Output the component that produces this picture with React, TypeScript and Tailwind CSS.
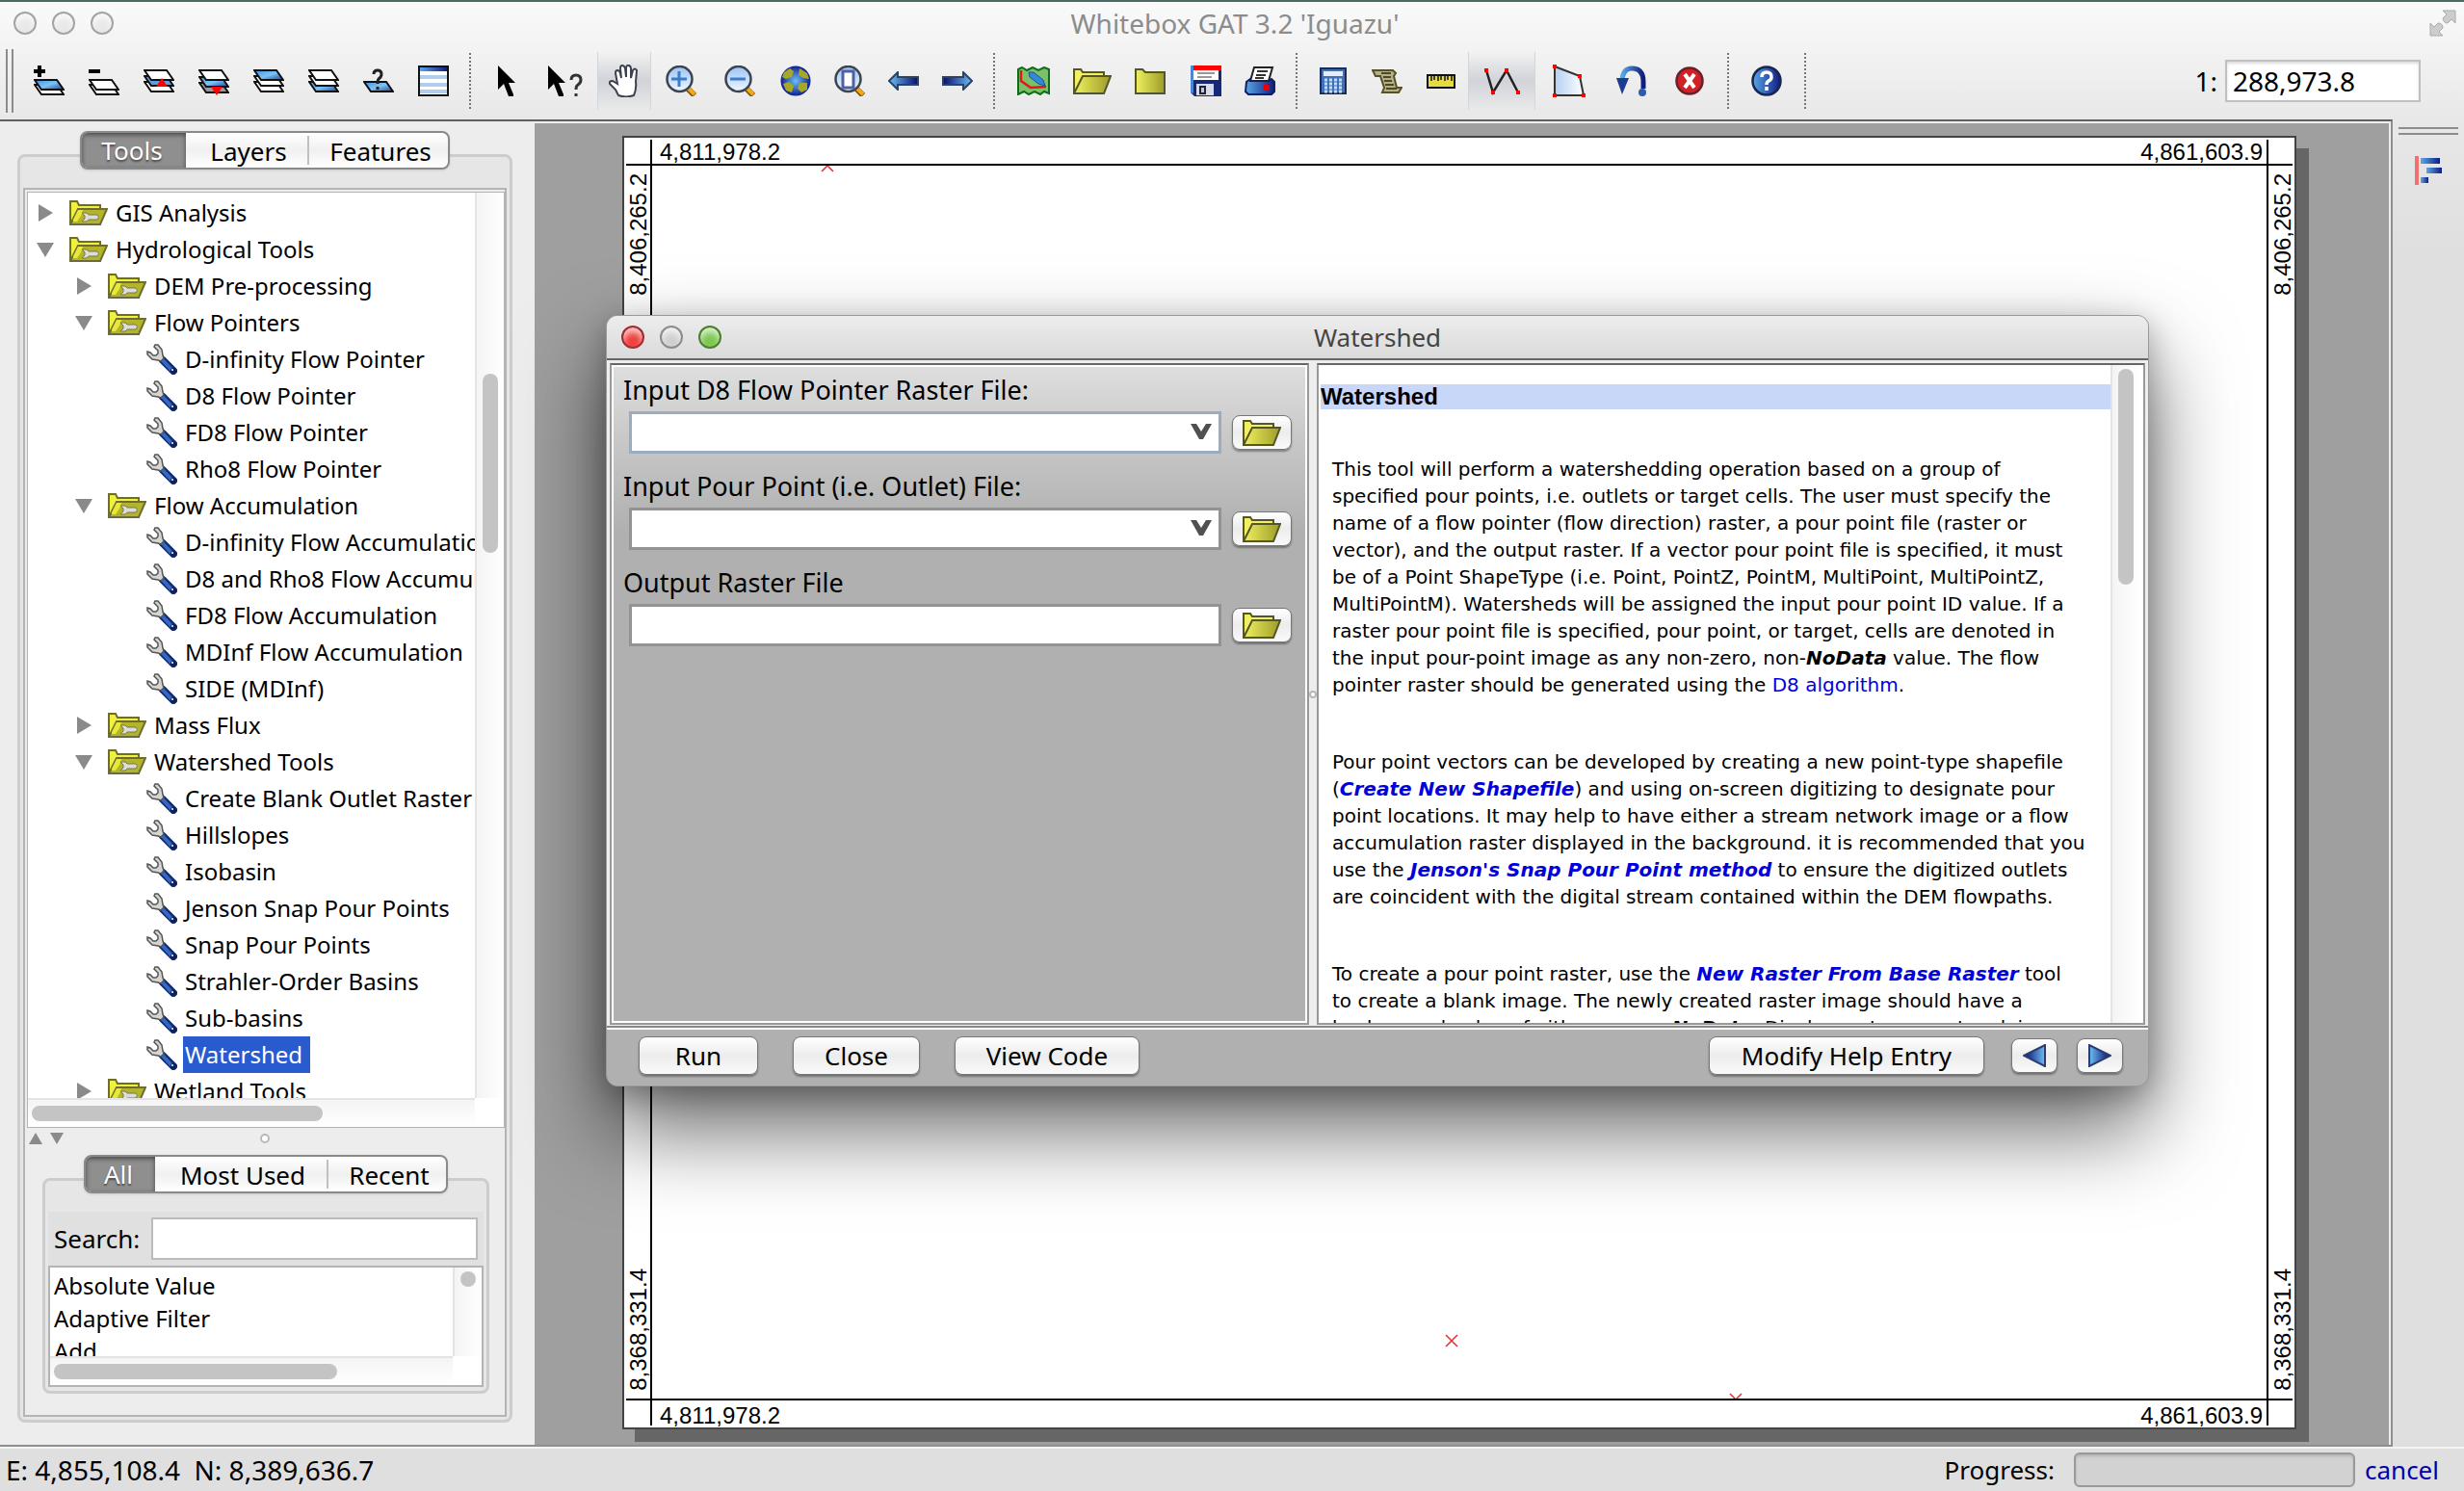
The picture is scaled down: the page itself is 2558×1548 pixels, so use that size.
import { ReactNode } from "react";
import clsx from "clsx";

const OUTLINE = "#3c4250";

/* ---------- gradients shared by every icon ---------- */

const IconDefs = () => (
  <svg width="0" height="0" className="absolute" aria-hidden="true">
    <defs>
      <linearGradient id="sky" x1="0" y1="0" x2="1" y2="1">
        <stop offset="0" stopColor="#3f8fe0" />
        <stop offset=".5" stopColor="#7cc4f5" />
        <stop offset="1" stopColor="#1b3fa0" />
      </linearGradient>
      <linearGradient id="arrowLeft" x1="0" y1="0" x2="1" y2="0">
        <stop offset="0" stopColor="#6cc0f4" />
        <stop offset="1" stopColor="#0a0a70" />
      </linearGradient>
      <linearGradient id="arrowRight" x1="1" y1="0" x2="0" y2="0">
        <stop offset="0" stopColor="#6cc0f4" />
        <stop offset="1" stopColor="#0a0a70" />
      </linearGradient>
      <linearGradient id="lens" x1="0" y1="0" x2="0" y2="1">
        <stop offset="0" stopColor="#9cc4f4" />
        <stop offset="1" stopColor="#eef7ff" />
      </linearGradient>
      <linearGradient id="gold" x1="0" y1="0" x2="1" y2="0">
        <stop offset="0" stopColor="#f0f060" />
        <stop offset="1" stopColor="#9c9c28" />
      </linearGradient>
      <linearGradient id="deep" x1="0" y1="0" x2="1" y2="0">
        <stop offset="0" stopColor="#5aa8e8" />
        <stop offset="1" stopColor="#101c80" />
      </linearGradient>
      <radialGradient id="ocean">
        <stop offset="0" stopColor="#6cc0f8" />
        <stop offset="1" stopColor="#10208c" />
      </radialGradient>
      <linearGradient id="pale" x1="0" y1="0" x2="1" y2="0">
        <stop offset="0" stopColor="#b4d0f0" />
        <stop offset="1" stopColor="#fff" />
      </linearGradient>
    </defs>
  </svg>
);

interface IconProps {
  w?: number;
  h?: number;
  children: ReactNode;
}

const Icon = ({ w = 32, h = 32, children }: IconProps) => (
  <svg width={w} height={h} viewBox={`0 0 ${w} ${h}`} fill="none" className="shrink-0" aria-hidden="true">
    {children}
  </svg>
);

interface SheetProps {
  y: number;
  fill?: string;
}

const Sheet = ({ y, fill = "#fff" }: SheetProps) => (
  <path d={`M1 ${y}H24L31 ${y + 10}H8Z`} fill={fill} stroke="#111" strokeWidth="2" />
);

const AddLayerIcon = () => (
  <Icon>
    <path d="M6 0V12M0 6H12" stroke="#000" strokeWidth="4" />
    <Sheet y={20} />
    <Sheet y={15} fill="url(#sky)" />
  </Icon>
);

const RemoveLayerIcon = () => (
  <Icon>
    <path d="M0 6H12" stroke="#000" strokeWidth="4" />
    <Sheet y={20} />
    <Sheet y={15} />
  </Icon>
);

const RaiseLayerIcon = () => (
  <Icon>
    <Sheet y={17} />
    <Sheet y={11} fill="#5aa0e0" />
    <Sheet y={5} />
    <path d="M19 13L25 22H13Z" fill="#f00" />
  </Icon>
);

const LowerLayerIcon = () => (
  <Icon>
    <Sheet y={18} fill="#999" />
    <Sheet y={12} fill="url(#sky)" />
    <Sheet y={5} />
    <path d="M13 22H25L19 31Z" fill="#f00" />
  </Icon>
);

const LayerToTopIcon = () => (
  <Icon>
    <Sheet y={17} />
    <Sheet y={11} />
    <Sheet y={5} fill="url(#sky)" />
  </Icon>
);

const LayerToBottomIcon = () => (
  <Icon>
    <Sheet y={17} fill="url(#sky)" />
    <Sheet y={11} />
    <Sheet y={5} />
  </Icon>
);

const LayerInfoIcon = () => (
  <Icon>
    <Sheet y={17} fill="url(#sky)" />
    <path d="M11 9Q11 5 15 5T19 9Q19 12 16 14Q15 15 15 19M15 22V25" stroke="#222" strokeWidth="3" />
  </Icon>
);

const TableIcon = () => (
  <Icon>
    <rect x="1" y="1" width="30" height="30" fill="#fff" stroke="#111" strokeWidth="2" />
    <rect x="2" y="2" width="28" height="4" fill="url(#deep)" />
    <path d="M2 10H30V14H2ZM2 18H30V22H2ZM2 25H30V29H2Z" fill="#b0cdee" />
  </Icon>
);

const ARROW = "M1 1V26L7 20L12 33H17V31L12 19H19Z";

const PointerIcon = () => (
  <Icon w={20} h={34}>
    <path d={ARROW} fill="#000" />
  </Icon>
);

const WhatsThisIcon = () => (
  <Icon w={38} h={34}>
    <path d={ARROW} fill="#000" />
    <path d="M25 16Q25 11 30 11T35 16Q35 19 32 21Q30 22 30 26M30 30V33" stroke="#333" strokeWidth="3" />
  </Icon>
);

const HandIcon = () => (
  <Icon h={34}>
    <path
      d="M10 32L7 26L1 20Q0 17 4 17L9 20L7 9Q7 6 9 6T12 9L13 14L12 4Q12 1 14 1T17 4L18 13L18 3Q19 0 21 1T23 4L23 14L25 6Q27 3 29 6L28 18Q29 25 26 32Q18 35 10 32Z"
      fill="#fff"
      stroke={OUTLINE}
      strokeWidth="2"
    />
  </Icon>
);

interface LensProps {
  children?: ReactNode;
}

const LensIcon = ({ children }: LensProps) => (
  <Icon>
    <path d="M21 22L30 31" stroke="#7a5200" strokeWidth="6" />
    <path d="M23 23L30 30" stroke="#f0a820" strokeWidth="4" />
    <circle cx="14.5" cy="14" r="13" fill="url(#lens)" stroke={OUTLINE} strokeWidth="2.5" />
    {children}
  </Icon>
);

const ZoomInIcon = () => (
  <LensIcon>
    <path d="M14 6V22M6 14H22" stroke="#3c7cc8" strokeWidth="3" />
  </LensIcon>
);

const ZoomOutIcon = () => (
  <LensIcon>
    <path d="M6 14H22" stroke="#3c7cc8" strokeWidth="3" />
  </LensIcon>
);

const ZoomPageIcon = () => (
  <LensIcon>
    <rect x="9" y="6" width="11" height="17" fill="#fff" stroke="#5060a0" strokeWidth="3" />
  </LensIcon>
);

const GlobeIcon = () => (
  <Icon>
    <circle cx="16" cy="16" r="15.5" fill="url(#ocean)" />
    <path
      d="M4 7L10 3L14 6L12 12L6 14L2 12ZM20 3L28 8L30 14L24 13L19 10ZM3 19L9 17L14 21L12 28L6 26ZM20 18L28 18L28 25L22 28L18 24Z"
      fill="#a8a828"
    />
  </Icon>
);

const BackIcon = () => (
  <Icon h={20}>
    <path d="M1 10L10 1V6H31V14H10V19Z" fill="url(#arrowLeft)" stroke="#2a4468" strokeWidth="2" />
  </Icon>
);

const ForwardIcon = () => (
  <Icon h={20}>
    <path d="M31 10L22 1V6H1V14H22V19Z" fill="url(#arrowRight)" stroke="#2a4468" strokeWidth="2" />
  </Icon>
);

const MapIcon = () => (
  <Icon w={34} h={30}>
    <path
      d="M1 3L5 1L10 4L16 1L22 4L28 1L33 3V28L28 26L24 29L18 26L12 29L7 26L1 29Z"
      fill="#7cc068"
      stroke="#0c6c1c"
      strokeWidth="2"
    />
    <path d="M4 4V15L14 22L30 21" stroke="#e01818" strokeWidth="2.5" />
    <path d="M12 6L17 6L27 14L29 20L22 18L13 11Z" fill="#3488d8" stroke="#1c50a0" />
  </Icon>
);

const OpenFolderIcon = () => (
  <Icon w={40} h={28}>
    <path d="M1 26V2H8L10 5H32V26Z" fill="#f0f060" stroke="#55552c" strokeWidth="2" />
    <path d="M1 27L10 9H39L32 27Z" fill="url(#gold)" stroke="#55552c" strokeWidth="2" />
  </Icon>
);

const FolderIcon = () => (
  <Icon h={28}>
    <path d="M1 27V2H8L11 5H31V27Z" fill="url(#gold)" stroke="#55552c" strokeWidth="2" />
  </Icon>
);

const SaveIcon = () => (
  <Icon>
    <path d="M0 0H32V32H4L0 28Z" fill="#182878" />
    <path d="M0 0H3V29L0 28Z" fill="#4c88d0" />
    <rect x="3" width="26" height="15" fill="#fff" />
    <rect x="3" width="29" height="5" fill="#f00" />
    <path d="M7 8H25M7 12H22" stroke="#999" strokeWidth="2" />
    <rect x="6" y="19" width="18" height="12" fill="#d8dce8" />
    <rect x="9" y="21" width="7" height="9" fill="#223" />
    <rect x="11" y="23" width="3" height="5" fill="#b8c8e8" />
  </Icon>
);

const PrinterIcon = () => (
  <Icon h={30}>
    <path d="M10 1H29L25 15H6Z" fill="#fff" stroke="#222" strokeWidth="2" />
    <path d="M13 5H24M12 9H22M11 12H20" stroke="#333" strokeWidth="2" />
    <path d="M2 16L6 13V15H25L28 13L31 16V26L28 29H4L1 26Z" fill="url(#deep)" stroke="#10205c" strokeWidth="2" />
    <rect x="20" y="19" width="6" height="6" fill="#e00" />
  </Icon>
);

const CalculatorIcon = () => (
  <Icon w={28} h={28}>
    <rect x="1" y="1" width="26" height="26" fill="#4070b8" stroke="#1c2c58" strokeWidth="2" />
    <rect x="4" y="4" width="20" height="5" fill="#e0eeff" />
    <path d="M5 13H24M5 17H24M5 21H24M5 25H24" stroke="#c0dcf8" strokeWidth="3" strokeDasharray="3 2" />
  </Icon>
);

const ScriptIcon = () => (
  <Icon h={26}>
    <path d="M1 2H22L25 5L23 8L26 20H31L28 25H11L13 20L9 8H4Z" fill="#b4b084" stroke="#55502c" strokeWidth="2" />
    <path d="M10 5H20M12 9H20M13 13H21M14 17H23M15 21H26" stroke="#4c4828" strokeWidth="2" />
  </Icon>
);

const RulerIcon = () => (
  <Icon w={30} h={15}>
    <rect x="1" y="1" width="28" height="13" fill="#e4dc40" stroke="#111" strokeWidth="2" />
    <path d="M5 2V7M8 2V6M12 2V7M15 2V6M19 2V7M22 2V6M26 2V7" stroke="#111" strokeWidth="1.5" />
  </Icon>
);

const PolylineIcon = () => (
  <Icon w={38} h={30}>
    <path d="M3 4L10 27L24 4L36 27" stroke="#222" strokeWidth="2.5" />
    <path d="M1 2H5V6H1ZM8 25H12V29H8ZM22 2H26V6H22ZM34 25H38V29H34Z" fill="#f00" />
  </Icon>
);

const PolygonIcon = () => (
  <Icon w={36} h={36}>
    <path d="M3 3L29 13L33 33H3Z" fill="url(#pale)" stroke="#333" strokeWidth="2" />
    <path d="M1 1H5V5H1ZM27 11H31V15H27ZM31 31H35V35H31ZM1 31H5V35H1Z" fill="#f00" />
  </Icon>
);

const UndoIcon = () => (
  <Icon>
    <path d="M6 15Q7 3 16 3Q28 3 28 17V24" stroke="url(#deep)" strokeWidth="5" />
    <path d="M0 13H13L6 30Z" fill="#1c3c90" />
    <circle cx="27" cy="28" r="4" fill="#2c5cb0" />
  </Icon>
);

const DeleteIcon = () => (
  <Icon w={30} h={30}>
    <circle cx="15" cy="15" r="13.5" fill="#d02028" stroke="#6a2028" strokeWidth="2.5" />
    <path d="M10 8L20 22M20 8L10 22" stroke="#fff" strokeWidth="4" />
  </Icon>
);

const HelpIcon = () => (
  <Icon>
    <circle cx="16" cy="16" r="14.5" fill="url(#deep)" stroke="#16264c" strokeWidth="2.5" />
    <path d="M11 12Q11 7 16 7T21 12Q21 15 18 16Q16 17 16 20M16 22V26" stroke="#fff" strokeWidth="3.5" />
  </Icon>
);

const ToolFolderIcon = () => (
  <Icon w={40} h={26}>
    <path d="M1 25V1H8L10 5H32V25Z" fill="#f0f040" stroke="#6c6c38" strokeWidth="2" />
    <path d="M1 25L9 9H39L32 25Z" fill="#b4b428" stroke="#6c6c38" strokeWidth="2" />
    <path d="M4 20L9 10H14L12 16L8 22H4Z" fill="#e8e838" />
    <path d="M13 13L18 13L20 15H29Q32 17 29 20H20L18 22H13L16 19V16Z" fill="#dcdcdc" stroke="#77774a" />
  </Icon>
);

const WrenchIcon = () => (
  <Icon>
    <path d="M17 17L28 28" stroke="#142c68" strokeWidth="8" strokeLinecap="round" />
    <path d="M16 16L26 27" stroke="#3468c8" strokeWidth="4" />
    <path
      d="M9 1L12 1L16 6L17 12L18 15L15 18L12 17L6 16L1 11V8L4 9L7 12H10L12 10V7L8 3Z"
      fill="#d4d4d0"
      stroke="#555"
      strokeWidth="1.5"
    />
    <circle cx="28" cy="28" r="3" fill="#10205c" />
    <circle cx="27" cy="27" r="1" fill="#fff" />
  </Icon>
);

const HistogramIcon = () => (
  <Icon w={28} h={30}>
    <rect width="4" height="30" fill="#f07070" />
    <rect x="6" y="2" width="20" height="6" fill="url(#deep)" />
    <rect x="12" y="12" width="16" height="6" fill="url(#deep)" />
    <rect x="6" y="22" width="8" height="6" fill="url(#deep)" />
  </Icon>
);

const FullscreenIcon = () => (
  <Icon w={28} h={28}>
    <path
      d="M14 1H27V14L23 10L19 14Q15 14 14 9L18 5ZM1 14L5 18L9 14Q14 14 14 19L10 23L14 27H1Z"
      fill="#ccc"
      stroke="#aaa"
    />
  </Icon>
);

const Triangle = ({ open }: { open: boolean }) => (
  <Icon w={18} h={18}>
    <path d={open ? "M0 2H18L9 17Z" : "M2 0V18L17 9Z"} fill="#8a8a8a" />
  </Icon>
);

/* ---------- main tool bar ---------- */

interface Tool {
  label: string;
  icon: ReactNode;
  width: string;
  pressed?: boolean;
}

const toolGroups: Tool[][] = [
  [
    { label: "Add layer", icon: <AddLayerIcon />, width: "w-[57px]" },
    { label: "Remove layer", icon: <RemoveLayerIcon />, width: "w-[57px]" },
    { label: "Raise layer", icon: <RaiseLayerIcon />, width: "w-[57px]" },
    { label: "Lower layer", icon: <LowerLayerIcon />, width: "w-[57px]" },
    { label: "Layer to top", icon: <LayerToTopIcon />, width: "w-[57px]" },
    { label: "Layer to bottom", icon: <LayerToBottomIcon />, width: "w-[57px]" },
    { label: "Layer properties", icon: <LayerInfoIcon />, width: "w-[57px]" },
    { label: "Attribute table", icon: <TableIcon />, width: "w-[57px]" },
  ],
  [
    { label: "Select", icon: <PointerIcon />, width: "w-[56px]" },
    { label: "Select feature", icon: <WhatsThisIcon />, width: "w-[66px]" },
    { label: "Pan", icon: <HandIcon />, width: "w-[56px]", pressed: true },
    { label: "Zoom in", icon: <ZoomInIcon />, width: "w-[62px]" },
    { label: "Zoom out", icon: <ZoomOutIcon />, width: "w-[60px]" },
    { label: "Full extent", icon: <GlobeIcon />, width: "w-[56px]" },
    { label: "Zoom to page", icon: <ZoomPageIcon />, width: "w-[56px]" },
    { label: "Previous extent", icon: <BackIcon />, width: "w-[56px]" },
    { label: "Next extent", icon: <ForwardIcon />, width: "w-[56px]" },
  ],
  [
    { label: "New map", icon: <MapIcon />, width: "w-[62px]" },
    { label: "Open map", icon: <OpenFolderIcon />, width: "w-[60px]" },
    { label: "Close map", icon: <FolderIcon />, width: "w-[60px]" },
    { label: "Save map", icon: <SaveIcon />, width: "w-[56px]" },
    { label: "Print map", icon: <PrinterIcon />, width: "w-[56px]" },
  ],
  [
    { label: "Raster calculator", icon: <CalculatorIcon />, width: "w-[56px]" },
    { label: "Scripting", icon: <ScriptIcon />, width: "w-[56px]" },
    { label: "Measure distance", icon: <RulerIcon />, width: "w-[56px]" },
    { label: "Edit vector", icon: <PolylineIcon />, width: "w-[70px]", pressed: true },
    { label: "Digitize feature", icon: <PolygonIcon />, width: "w-[70px]" },
    { label: "Undo last node", icon: <UndoIcon />, width: "w-[60px]" },
    { label: "Delete feature", icon: <DeleteIcon />, width: "w-[60px]" },
  ],
  [{ label: "Help", icon: <HelpIcon />, width: "w-[60px]" }],
];

const ToolButton = ({ label, icon, width, pressed }: Tool) => (
  <button
    aria-label={label}
    aria-pressed={pressed}
    className={clsx(
      "h-[60px] flex items-center justify-center",
      width,
      pressed && "border-x border-gray-300 bg-gradient-to-b from-transparent via-gray-400/35 to-transparent"
    )}
  >
    {icon}
  </button>
);

const Light = ({ color, size }: { color: string; size: string }) => (
  <span className={clsx("rounded-full border-2 shadow-[inset_0_5px_6px_rgba(255,255,255,0.7)]", color, size)} />
);

const Header = () => (
  <header className="border-t-2 border-[#4d6a66] bg-gradient-to-b from-[#fafafa] to-[#e8e8e8]">
    <div className="h-[44px] grid grid-cols-[1fr_auto_1fr] items-center pl-[14px] pr-2">
      <div className="flex gap-4">
        <Light color="bg-[#e8e8e8] border-[#a4a4a4]" size="size-6" />
        <Light color="bg-[#e8e8e8] border-[#a4a4a4]" size="size-6" />
        <Light color="bg-[#e8e8e8] border-[#a4a4a4]" size="size-6" />
      </div>
      <h1 className="text-[28px] leading-8 text-[#8c8c8c]">Whitebox GAT 3.2 'Iguazu'</h1>
      <div className="flex justify-end">
        <FullscreenIcon />
      </div>
    </div>
    <div className="h-[78px] flex items-center pb-[2px] pl-[6px] pr-[45px]">
      <div className="w-2 h-[66px] mr-2 border-x-2 border-[#8c8c8c]" />
      {toolGroups.map((group, i) => (
        <div key={i} className="flex items-center">
          {group.map((tool) => (
            <ToolButton key={tool.label} {...tool} />
          ))}
          <div className="w-5 flex justify-center">
            <div className="h-[58px] border-l-2 border-dotted border-[#777]" />
          </div>
        </div>
      ))}
      <label className="ml-auto flex items-center gap-2 text-[28px] leading-8">
        1:
        <input
          defaultValue="288,973.8"
          className="w-[203px] h-[44px] px-[6px] bg-white border-2 border-[#c0c0c0] shadow-[inset_0_2px_3px_rgba(0,0,0,0.15)]"
        />
      </label>
    </div>
  </header>
);

/* ---------- side panel ---------- */

interface Node {
  label: string;
  level: 0 | 1 | 2;
  open?: boolean;
  selected?: boolean;
}

const nodes: Node[] = [
  { label: "GIS Analysis", level: 0 },
  { label: "Hydrological Tools", level: 0, open: true },
  { label: "DEM Pre-processing", level: 1 },
  { label: "Flow Pointers", level: 1, open: true },
  { label: "D-infinity Flow Pointer", level: 2 },
  { label: "D8 Flow Pointer", level: 2 },
  { label: "FD8 Flow Pointer", level: 2 },
  { label: "Rho8 Flow Pointer", level: 2 },
  { label: "Flow Accumulation", level: 1, open: true },
  { label: "D-infinity Flow Accumulation", level: 2 },
  { label: "D8 and Rho8 Flow Accumulation", level: 2 },
  { label: "FD8 Flow Accumulation", level: 2 },
  { label: "MDInf Flow Accumulation", level: 2 },
  { label: "SIDE (MDInf)", level: 2 },
  { label: "Mass Flux", level: 1 },
  { label: "Watershed Tools", level: 1, open: true },
  { label: "Create Blank Outlet Raster", level: 2 },
  { label: "Hillslopes", level: 2 },
  { label: "Isobasin", level: 2 },
  { label: "Jenson Snap Pour Points", level: 2 },
  { label: "Snap Pour Points", level: 2 },
  { label: "Strahler-Order Basins", level: 2 },
  { label: "Sub-basins", level: 2 },
  { label: "Watershed", level: 2, selected: true },
  { label: "Wetland Tools", level: 1 },
];

const indents = ["pl-[9px]", "pl-[49px]", "pl-[123px]"];

const TreeRow = ({ label, level, open = false, selected }: Node) => (
  <li role="treeitem" aria-selected={!!selected} className={clsx("h-[38px] flex items-center", indents[level])}>
    {level < 2 ? (
      <>
        <Triangle open={open} />
        <span className="ml-4 mr-[6px]">
          <ToolFolderIcon />
        </span>
      </>
    ) : (
      <span className="mr-[6px]">
        <WrenchIcon />
      </span>
    )}
    <span
      className={clsx(
        "h-full pl-[2px] pr-2 leading-[38px] whitespace-nowrap",
        selected && "bg-[#2a5bce] text-white"
      )}
    >
      {label}
    </span>
  </li>
);

interface TabsProps {
  labels: string[];
  widths: string[];
}

const Tabs = ({ labels, widths }: TabsProps) => (
  <div
    role="tablist"
    className="relative z-10 h-10 flex items-center overflow-hidden rounded-lg border-2 border-[#8a8a8a] bg-gradient-to-b from-white via-[#f0f0f0] to-white shadow-sm"
  >
    {labels.map((label, i) => (
      <button
        key={label}
        role="tab"
        aria-selected={i === 0}
        className={clsx(
          "text-[26px] leading-8",
          widths[i],
          i === 0
            ? "h-full pr-1 bg-[#8f8f8f] text-white shadow-[inset_0_2px_5px_rgba(0,0,0,0.5)] [text-shadow:0_2px_2px_rgba(0,0,0,0.5)]"
            : "h-[30px] pl-1",
          i === 2 && "border-l-2 border-[#c0c0c0]"
        )}
      >
        {label}
      </button>
    ))}
  </div>
);

const VerticalBar = ({ thumb }: { thumb: string }) => (
  <div className="w-[30px] shrink-0 border-l-2 border-[#e4e4e4] bg-gradient-to-r from-[#f4f4f4] to-white">
    <div className={clsx("w-4 mx-auto rounded-full bg-[#c4c4c4]", thumb)} />
  </div>
);

const HorizontalBar = ({ thumb }: { thumb: string }) => (
  <div className="h-[30px] shrink-0 mr-[30px] border-t-2 border-[#e4e4e4] flex items-center bg-gradient-to-b from-[#f4f4f4] to-white">
    <div className={clsx("h-4 ml-1 rounded-full bg-[#c4c4c4]", thumb)} />
  </div>
);

const Sidebar = () => (
  <aside className="w-[555px] shrink-0 flex flex-col pt-[10px] pb-[23px] pl-[18px] pr-[23px] bg-[#ededed]">
    <div className="flex justify-center">
      <Tabs labels={["Tools", "Layers", "Features"]} widths={["w-[108px]", "w-[126px]", "w-[146px]"]} />
    </div>
    <div className="flex-1 min-h-0 -mt-4 pt-8 px-[3px] pb-[3px] flex flex-col rounded-lg border-[3px] border-[#cdcdcd] bg-[#e6e6e6]">
      <div className="flex-1 min-h-0 flex flex-col border-2 border-[#b4b4b4] bg-[#ededed]">
        {/* Tool tree */}
        <div className="flex-1 min-h-0 my-[2px] ml-[2px] flex flex-col border border-[#b4b4b4] bg-white">
          <div className="flex-1 min-h-0 flex">
            <ul role="tree" className="flex-1 min-w-0 pt-[2px] overflow-hidden text-[24px]">
              {nodes.map((node) => (
                <TreeRow key={node.label} {...node} />
              ))}
            </ul>
            <VerticalBar thumb="h-[186px] mt-[188px]" />
          </div>
          <HorizontalBar thumb="w-[302px]" />
        </div>

        {/* Split pane handle */}
        <div className="h-[18px] grid grid-cols-3 items-center px-1">
          <div className="flex gap-2">
            <Icon w={14} h={12}>
              <path d="M0 12H14L7 0Z" fill="#8a8a8a" />
            </Icon>
            <Icon w={14} h={12}>
              <path d="M0 0H14L7 12Z" fill="#8a8a8a" />
            </Icon>
          </div>
          <span className="size-[10px] mx-auto rounded-full border-2 border-[#b8b8b8] bg-white" />
        </div>

        {/* Search */}
        <div className="pt-2 pl-[18px] pr-4 pb-[22px]">
          <div className="flex justify-center">
            <Tabs labels={["All", "Most Used", "Recent"]} widths={["w-[72px]", "w-[178px]", "w-[124px]"]} />
          </div>
          <div className="-mt-4 pt-8 px-[3px] pb-1 rounded-lg border-[3px] border-[#cdcdcd] bg-[#e6e6e6]">
            <label className="h-[56px] flex items-center gap-3 px-[6px] bg-[#e0e0e0] text-[26px]">
              Search:
              <input className="flex-1 min-w-0 h-[44px] px-2 border-2 border-[#bcbcbc] bg-white" />
            </label>
            <div className="h-[126px] flex flex-col border-2 border-[#b4b4b4] bg-white">
              <div className="flex-1 min-h-0 flex">
                <ul className="flex-1 pt-[2px] pl-1 overflow-hidden text-[24px] leading-[34px]">
                  <li>Absolute Value</li>
                  <li>Adaptive Filter</li>
                  <li>Add</li>
                </ul>
                <VerticalBar thumb="h-4 mt-1" />
              </div>
              <HorizontalBar thumb="w-[294px]" />
            </div>
          </div>
        </div>
      </div>
    </div>
  </aside>
);

/* ---------- map ---------- */

const Cross = ({ className }: { className: string }) => (
  <svg width="14" height="14" viewBox="0 0 14 14" className={clsx("absolute", className)} aria-hidden="true">
    <path d="M1 1L13 13M13 1L1 13" stroke="#e03030" strokeWidth="1.5" />
  </svg>
);

const MapPage = () => (
  <div className="h-full p-[2px] bg-white border-2 border-[#444] shadow-[13px_13px_0_#666]">
    <div className="h-full grid grid-cols-[27px_1fr_27px] grid-rows-[27px_1fr_28px] font-['Liberation_Sans',Arial,sans-serif] text-[24px] leading-5">
      <div className="border-r-2 border-b-2 border-black" />
      <div className="flex justify-between items-center px-1 pl-2 border-b-2 border-black">
        <span>4,811,978.2</span>
        <span>4,861,603.9</span>
      </div>
      <div className="border-l-2 border-b-2 border-black" />

      <div className="flex flex-col justify-between items-center py-2 border-r-2 border-black">
        <span className="rotate-180 [writing-mode:vertical-rl]">8,406,265.2</span>
        <span className="rotate-180 [writing-mode:vertical-rl]">8,368,331.4</span>
      </div>
      <div className="relative overflow-hidden">
        <Cross className="left-[175px] -top-[7px]" />
        <Cross className="left-[823px] bottom-[53px]" />
        <Cross className="left-[1118px] -bottom-[8px]" />
      </div>
      <div className="flex flex-col justify-between items-end py-2 border-l-2 border-black">
        <span className="rotate-180 [writing-mode:vertical-rl]">8,406,265.2</span>
        <span className="rotate-180 [writing-mode:vertical-rl]">8,368,331.4</span>
      </div>

      <div className="border-r-2 border-t-2 border-black" />
      <div className="flex justify-between items-end px-1 pl-2 border-t-2 border-black">
        <span>4,811,978.2</span>
        <span>4,861,603.9</span>
      </div>
      <div className="border-l-2 border-t-2 border-black" />
    </div>
  </div>
);

/* ---------- Watershed dialog ---------- */

const pushButton =
  "flex items-center justify-center rounded-lg border border-[#777] bg-gradient-to-b from-white via-[#ececec] to-[#fafafa] shadow-[0_2px_2px_rgba(0,0,0,0.35)]";

interface FileFieldProps {
  id: string;
  label: string;
  choices?: boolean;
  focused?: boolean;
}

const FileField = ({ id, label, choices, focused }: FileFieldProps) => {
  const box = clsx(
    "w-full h-[44px] px-2 appearance-none border-[3px] bg-white outline-none",
    focused ? "border-[#9aacc0]" : "border-[#939393]"
  );

  return (
    <div className="mb-3">
      <label htmlFor={id} className="block h-[44px] leading-[44px] text-[27px]">
        {label}
      </label>
      <div className="flex items-center gap-[11px] pl-[6px]">
        <div className="relative flex-1">
          {choices ? <select id={id} className={box} /> : <input id={id} className={box} />}
          {choices && (
            <svg width="22" height="16" viewBox="0 0 22 16" className="absolute right-[10px] top-[13px] pointer-events-none">
              <path d="M0 0H6L11 8L16 0H22L13 16H9Z" fill="#505050" />
            </svg>
          )}
        </div>
        <button aria-label={`Browse for ${label}`} className={clsx(pushButton, "w-[62px] h-[36px]")}>
          <OpenFolderIcon />
        </button>
      </div>
    </div>
  );
};

const HelpLink = ({ children }: { children: ReactNode }) => (
  <a href="#help" className="font-bold italic text-[#0000dd]">
    {children}
  </a>
);

const HelpText = () => (
  <article className="flex-1 min-w-0 overflow-hidden bg-white whitespace-nowrap font-['DejaVu_Sans',Verdana,sans-serif] text-[20px] leading-7">
    <h3 className="mt-5 ml-[2px] h-[26px] leading-[26px] bg-[#c8d6f8] font-bold text-[24px] font-['Liberation_Sans',Arial,sans-serif]">
      Watershed
    </h3>
    <div className="mt-[48px] ml-[14px] space-y-[52px]">
      <p>
        This tool will perform a watershedding operation based on a group of
        <br />
        specified pour points, i.e. outlets or target cells. The user must specify the
        <br />
        name of a flow pointer (flow direction) raster, a pour point file (raster or
        <br />
        vector), and the output raster. If a vector pour point file is specified, it must
        <br />
        be of a Point ShapeType (i.e. Point, PointZ, PointM, MultiPoint, MultiPointZ,
        <br />
        MultiPointM). Watersheds will be assigned the input pour point ID value. If a
        <br />
        raster pour point file is specified, pour point, or target, cells are denoted in
        <br />
        the input pour-point image as any non-zero, non-<b className="italic">NoData</b> value. The flow
        <br />
        pointer raster should be generated using the{" "}
        <a href="#d8" className="text-[#0000dd]">
          D8 algorithm
        </a>
        .
      </p>
      <p>
        Pour point vectors can be developed by creating a new point-type shapefile
        <br />(<HelpLink>Create New Shapefile</HelpLink>) and using on-screen digitizing to designate pour
        <br />
        point locations. It may help to have either a stream network image or a flow
        <br />
        accumulation raster displayed in the background. it is recommended that you
        <br />
        use the <HelpLink>Jenson's Snap Pour Point method</HelpLink> to ensure the digitized outlets
        <br />
        are coincident with the digital stream contained within the DEM flowpaths.
      </p>
      <p>
        To create a pour point raster, use the <HelpLink>New Raster From Base Raster</HelpLink> tool
        <br />
        to create a blank image. The newly created raster image should have a
        <br />
        background value of either zero or <b className="italic">NoData</b>. Display a stream network in
      </p>
    </div>
  </article>
);

const WatershedDialog = () => (
  <section
    aria-label="Watershed"
    className="absolute left-[74px] top-[199px] w-[1602px] h-[801px] flex flex-col overflow-hidden rounded-xl border border-[#999] bg-[#b0b0b0] shadow-[0_44px_90px_rgba(0,0,0,0.6),0_8px_30px_rgba(0,0,0,0.25)]"
  >
    <div className="h-[46px] grid grid-cols-[1fr_auto_1fr] items-center px-[15px] border-b-2 border-[#666] bg-gradient-to-b from-[#ededed] to-[#dadada]">
      <div className="flex gap-4">
        <Light color="bg-[#f04040] border-[#a03030]" size="size-6" />
        <Light color="bg-[#d0d0d0] border-[#8c8c8c]" size="size-6" />
        <Light color="bg-[#7cc850] border-[#4c8030]" size="size-6" />
      </div>
      <h2 className="text-[26px] leading-8 text-[#444]">Watershed</h2>
    </div>

    <div className="flex-1 min-h-0 flex p-[3px] bg-[#eee]">
      <div className="w-[726px] shrink-0 p-[2px] border-2 border-t-[#666] border-[#999] bg-white">
        <form className="h-full pt-[2px] pl-[10px] pr-[14px] bg-[linear-gradient(#dedede,#c4c4c4_90px,#b0b0b0_170px)]">
          <FileField id="pointer" label="Input D8 Flow Pointer Raster File:" choices focused />
          <FileField id="outlet" label="Input Pour Point (i.e. Outlet) File:" choices />
          <FileField id="output" label="Output Raster File" />
        </form>
      </div>
      <div className="w-2 shrink-0 flex items-center justify-center">
        <span className="size-2 rounded-full border-2 border-[#b8b8b8] bg-white" />
      </div>
      <div className="flex-1 min-w-0 flex border-2 border-t-[#666] border-[#999] bg-white pr-1">
        <HelpText />
        <VerticalBar thumb="h-[224px] mt-1" />
      </div>
    </div>

    <div className="h-[60px] shrink-0 flex items-center pb-1 pl-[33px] pr-[26px] border-t-2 border-white text-[26px] leading-8 shadow-[0_-2px_0_#888]">
      <button className={clsx(pushButton, "w-[124px] h-10 mr-9")}>Run</button>
      <button className={clsx(pushButton, "w-[132px] h-10 mr-9")}>Close</button>
      <button className={clsx(pushButton, "w-[192px] h-10")}>View Code</button>
      <button className={clsx(pushButton, "w-[286px] h-10 ml-auto mr-7")}>Modify Help Entry</button>
      <button aria-label="Previous page" className={clsx(pushButton, "w-12 h-9 mr-5")}>
        <Icon w={24} h={24}>
          <path d="M1 12L23 1V23Z" fill="url(#arrowRight)" stroke="#2c3c70" strokeWidth="2" />
        </Icon>
      </button>
      <button aria-label="Next page" className={clsx(pushButton, "w-12 h-9")}>
        <Icon w={24} h={24}>
          <path d="M23 12L1 1V23Z" fill="url(#arrowLeft)" stroke="#2c3c70" strokeWidth="2" />
        </Icon>
      </button>
    </div>
  </section>
);

const App = () => {
  return (
    <div className="h-screen flex flex-col overflow-hidden bg-[#dfdfdf] text-black font-['Noto_Sans','Open_Sans',sans-serif]">
      <IconDefs />
      <Header />

      <div className="flex-1 min-h-0 flex">
        <div className="flex-1 min-w-0 flex border-t-2 border-r-2 border-b-2 border-t-[#606060] border-[#8f8f8f]">
          <Sidebar />
          <main className="relative flex-1 min-w-0 pt-[13px] pb-4 pl-[91px] pr-24 border-t-2 border-r-2 border-[#eee] bg-[#9f9f9f]">
            <MapPage />
            <WatershedDialog />
          </main>
        </div>

        {/* Right tool bar */}
        <nav className="w-[74px] shrink-0 pt-2 bg-gradient-to-b from-[#e8e8e8] to-[#dfdfdf] to-10% flex flex-col items-center">
          <div className="w-[62px] h-2 border-y-2 border-[#8c8c8c]" />
          <button aria-label="Histogram" className="mt-[22px]">
            <HistogramIcon />
          </button>
        </nav>
      </div>

      <footer className="h-[46px] shrink-0 flex items-center pl-[6px] pr-[26px] border-t-2 border-[#f4f4f4] text-[26px] leading-8">
        <span className="whitespace-pre text-[28px]">E: 4,855,108.4  N: 8,389,636.7</span>
        <span className="ml-auto mr-5">Progress:</span>
        <div
          role="progressbar"
          aria-label="Progress"
          className="w-[292px] h-9 mr-[10px] rounded-md border-2 border-[#999] bg-[#d2d2d2] shadow-[inset_0_2px_3px_rgba(0,0,0,0.15)]"
        />
        <a href="#cancel" className="text-[#0000aa]">
          cancel
        </a>
      </footer>
    </div>
  );
};

export default App;
